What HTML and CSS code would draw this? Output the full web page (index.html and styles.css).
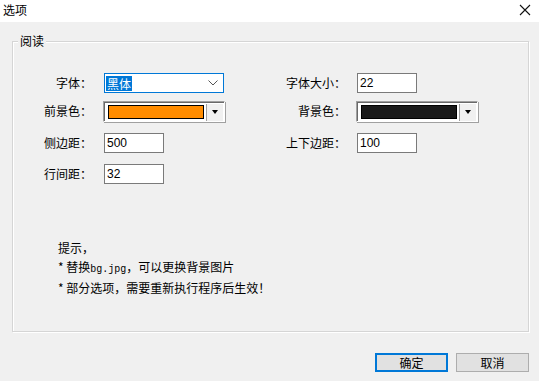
FILE: index.html
```html
<!DOCTYPE html>
<html lang="zh-CN">
<head>
    <meta charset="UTF-8">
    <meta name="viewport" content="width=device-width, initial-scale=1.0">
    <title>选项</title>
    <link rel="stylesheet" href="styles.css">
</head>
<body>
    <div class="titlebar">
        <span class="title">选项</span>
        <svg class="close" width="12" height="12" viewBox="0 0 12 12">
            <path d="M1 1 L11 11 M11 1 L1 11" stroke="#111" stroke-width="1.1" fill="none"/>
        </svg>
    </div>

    <div class="groupbox">
        <span class="legend">阅读</span>

        <div class="grid">
            <label class="lbl">字体：</label>
            <div class="combo">
                <span class="sel">黑体</span>
                <svg class="chev" width="10" height="6" viewBox="0 0 10 6">
                    <path d="M0.5 0.5 L5 5 L9.5 0.5" stroke="#555" stroke-width="1" fill="none"/>
                </svg>
            </div>
            <label class="lbl">字体大小：</label>
            <div class="input">22</div>

            <label class="lbl">前景色：</label>
            <div class="picker">
                <span class="swatch orange"></span>
                <span class="drop"><span class="tri"></span></span>
            </div>
            <label class="lbl">背景色：</label>
            <div class="picker">
                <span class="swatch black"></span>
                <span class="drop"><span class="tri"></span></span>
            </div>

            <label class="lbl">侧边距：</label>
            <div class="input">500</div>
            <label class="lbl">上下边距：</label>
            <div class="input">100</div>

            <label class="lbl">行间距：</label>
            <div class="input">32</div>
        </div>

        <div class="hints">
            <p>提示，</p>
            <p>* 替换<span class="mono">bg.jpg</span>，可以更换背景图片</p>
            <p>* 部分选项，需要重新执行程序后生效！</p>
        </div>
    </div>

    <div class="buttons">
        <button class="btn primary">确定</button>
        <button class="btn">取消</button>
    </div>
</body>
</html>
```

FILE: styles.css
```css
body {
    margin: 0;
    width: 539px;
    height: 381px;
    background-color: #f0f0f0;
    font-family: "Noto Sans CJK SC", "Liberation Sans", sans-serif;
    font-size: 12px;
    color: #000;
    overflow: hidden;
}
.titlebar {
    height: 22px;
    background-color: #fff;
    display: flex;
    justify-content: space-between;
    align-items: center;
    padding: 0 8px 0 3px;
}
.title {
    line-height: 14px;
    margin-top: -2px;
}
.close {
    margin-top: -2px;
}
.groupbox {
    position: relative;
    box-sizing: border-box;
    margin: 19px 10px 0 12px;
    height: 291px;
    border: 1px solid #d5d5d5;
    box-shadow: inset 1px 1px 0 #fff, 1px 1px 0 #fff;
}
.legend {
    position: absolute;
    top: -9px;
    left: 5px;
    padding: 0 2px;
    line-height: 16px;
    background-color: #f0f0f0;
}
.grid {
    display: grid;
    grid-template-columns: 91px 132px 121px auto;
    grid-template-rows: 28px 32px 31px 20px;
    margin-top: 31px;
}
.lbl {
    text-align: right;
    height: 20px;
    line-height: 20px;
    padding-right: 12px;
}
.grid .lbl:nth-child(4n+3) {
    padding-right: 11px;
}
.combo {
    box-sizing: border-box;
    width: 120px;
    height: 20px;
    background-color: #fff;
    border: 1px solid #0078d7;
    display: flex;
    align-items: center;
    justify-content: space-between;
    padding: 0 5px 0 1px;
}
.sel {
    background-color: #0078d7;
    color: #fff;
    line-height: 15px;
    padding: 0 1px;
}
.input {
    box-sizing: border-box;
    width: 60px;
    height: 20px;
    background-color: #fff;
    border: 1px solid #7a7a7a;
    padding-left: 2px;
    font-family: "Liberation Sans", sans-serif;
    line-height: 18px;
}
.picker {
    box-sizing: border-box;
    width: 122px;
    height: 21px;
    margin-left: -1px;
    background-color: #fff;
    border: 1px solid #a0a0a0;
    border-right-color: #fff;
    border-bottom-color: #fff;
    box-shadow: inset 1px 1px 0 #696969, 1px 1px 0 #a0a0a0;
    display: flex;
    align-items: center;
    padding: 0 1px 0 4px;
}
.swatch {
    box-sizing: border-box;
    width: 96px;
    height: 14px;
    border: 1px solid #000;
}
.orange {
    background-color: #ff8c00;
}
.black {
    background-color: #1a1a1a;
}
.drop {
    margin-left: auto;
    width: 16px;
    height: 17px;
    margin-top: 1px;
    border-left: 1px solid #a0a0a0;
    background-color: #f0f0f0;
    display: flex;
    align-items: center;
    justify-content: center;
}
.tri {
    width: 0;
    height: 0;
    border-left: 3.5px solid transparent;
    border-right: 3.5px solid transparent;
    border-top: 4px solid #000;
}
.hints {
    margin: 55px 0 0 45px;
    line-height: 18.5px;
}
.hints p {
    margin: 0;
}
.mono {
    font-family: "Liberation Mono", monospace;
    font-size: 10px;
}
.buttons {
    display: flex;
    justify-content: flex-end;
    gap: 8px;
    margin-top: 21px;
    padding-right: 10px;
}
.btn {
    box-sizing: border-box;
    width: 73px;
    height: 19px;
    padding: 0;
    background-color: #e1e1e1;
    border: 1px solid #adadad;
    font-family: "Noto Sans CJK SC", sans-serif;
    font-size: 12px;
    line-height: 15px;
    color: #000;
}
.primary {
    border: 2px solid #0078d7;
    line-height: 13px;
}
```
